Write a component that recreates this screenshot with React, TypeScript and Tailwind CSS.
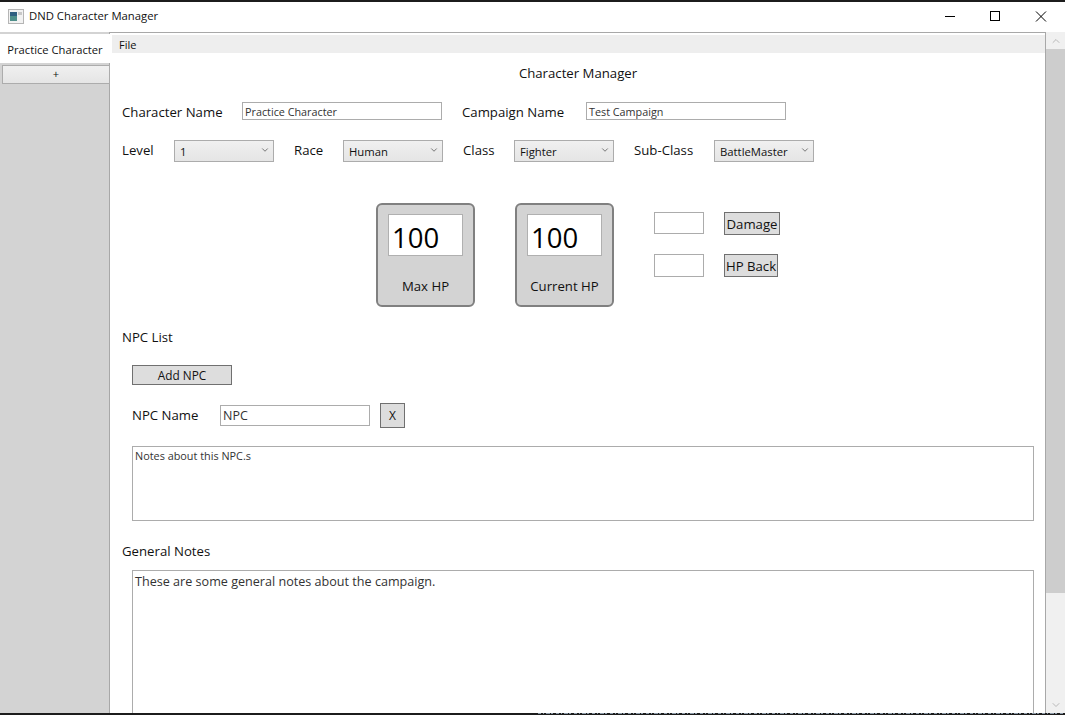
import React from 'react';
import { ChevronDown, ChevronUp } from 'lucide-react';

const fieldLabel = 'text-[13.2px] leading-[20px] text-[#111]';

const Select: React.FC<{ value: string; className: string }> = ({ value, className }) => (
    <div className={`h-[22px] border border-[#acacac] bg-gradient-to-b from-[#f0f0f0] to-[#e5e5e5] flex items-center justify-between pl-[5px] pr-[3px] text-[11.3px] text-[#111] ${className}`}>
        <span className="mt-[2px]">{value}</span>
        <ChevronDown size={10} strokeWidth={2} className="text-[#606060] mb-[3px]" />
    </div>
);

const HpCard: React.FC<{ label: string; className?: string }> = ({ label, className = '' }) => (
    <div className={`w-[99px] h-[104px] rounded-[6px] border-2 border-[#808080] bg-[#d3d3d3] flex flex-col items-center pt-[9px] ${className}`}>
        <div className="w-[75px] h-[42px] bg-white border border-[#b0b0b0] flex items-center pl-[3px] pt-[5px] text-[27.5px] text-black">100</div>
        <div className="mt-[20px] text-[13.2px] leading-[20px] text-[#111]">{label}</div>
    </div>
);

export default function App() {
    return (
        <div className="w-[1065px] h-[715px] overflow-hidden bg-white flex flex-col border-t-2 border-[#1c1c1c] font-['Open_Sans',sans-serif]">
            {/* title bar */}
            <div className="h-[30px] shrink-0 flex items-center bg-white">
                <svg width="16" height="15" viewBox="0 0 16 15" className="ml-[8px] mb-[2px]">
                    <rect x="0.5" y="0.5" width="15" height="14" fill="#f2f2f2" stroke="#b5b5b5" />
                    <rect x="2" y="3" width="7" height="9" fill="#4f8f8a" />
                    <rect x="2" y="3" width="7" height="4" fill="#2f5f80" />
                    <rect x="10" y="3" width="4" height="3" fill="#c8c8c8" />
                </svg>
                <div className="ml-[5px] text-[11.3px] text-[#111] mb-[1px]">DND Character Manager</div>
                <div className="ml-auto flex items-center">
                    <svg width="150" height="30" viewBox="0 0 150 30">
                        <path d="M30 14.5H40" stroke="#000" fill="none" />
                        <rect x="75.5" y="9.5" width="9" height="9" stroke="#000" fill="none" />
                        <path d="M121 9.5L131 19.5M131 9.5L121 19.5" stroke="#000" fill="none" />
                    </svg>
                </div>
            </div>

            <div className="flex-1 min-h-0 flex">
                {/* tab strip */}
                <div className="w-[109px] shrink-0 bg-[#d3d3d3] flex flex-col pt-[2px]">
                    <div className="h-[29px] w-[110px] shrink-0 bg-white pt-[3px] flex items-center justify-center text-[11.2px] text-[#111] z-10">Practice Character</div>
                    <div className="h-[19px] mt-[2px] ml-[2px] w-[108px] z-10 border border-[#acacac] bg-gradient-to-b from-[#f0f0f0] to-[#e5e5e5] flex items-center justify-center text-[11px] text-[#111]">+</div>
                </div>

                {/* main panel */}
                <div className="flex-1 min-w-0 flex flex-col border-l border-t border-[#a8a8a8]">
                    <div className="flex-1 min-h-0 flex">
                        <div className="flex-1 min-w-0 overflow-hidden border-r border-[#a8a8a8] pt-[2px]">
                            <div className="ml-[2px] h-[18px] bg-[#eeeeee] pl-[7px] pt-[1px] text-[11px] leading-[18px] text-[#111]">File</div>

                            <div className="mt-[10px] h-[20px] pl-[1px] text-center text-[13.2px] leading-[20px] text-[#111]">Character Manager</div>

                            <div className="mt-[19px] ml-[12px] flex items-center h-[18px]">
                                <div className={`${fieldLabel} w-[120px] mt-[1px]`}>Character Name</div>
                                <div className="w-[200px] h-[18px] border border-[#acacac] pl-[2px] pt-[1px] text-[10.8px] leading-[16px] text-[#333]">Practice Character</div>
                                <div className={`${fieldLabel} ml-[20px] w-[124px] mt-[1px]`}>Campaign Name</div>
                                <div className="w-[200px] h-[18px] border border-[#acacac] pl-[2px] pt-[1px] text-[10.8px] leading-[16px] text-[#333]">Test Campaign</div>
                            </div>

                            <div className="mt-[20px] ml-[12px] flex items-center h-[22px]">
                                <div className={`${fieldLabel} w-[52px] -mt-[3px]`}>Level</div>
                                <Select value="1" className="w-[100px]" />
                                <div className={`${fieldLabel} ml-[20px] w-[49px] -mt-[3px]`}>Race</div>
                                <Select value="Human" className="w-[100px]" />
                                <div className={`${fieldLabel} ml-[20px] w-[51px] -mt-[3px]`}>Class</div>
                                <Select value="Fighter" className="w-[100px]" />
                                <div className={`${fieldLabel} ml-[20px] w-[80px] -mt-[3px]`}>Sub-Class</div>
                                <Select value="BattleMaster" className="w-[100px]" />
                            </div>

                            <div className="mt-[41px] ml-[266px] flex">
                                <HpCard label="Max HP" />
                                <HpCard label="Current HP" className="ml-[40px]" />
                                <div className="ml-[40px] mt-[9px] flex flex-col">
                                    <div className="flex">
                                        <div className="w-[50px] h-[22px] border border-[#acacac]" />
                                        <div className="ml-[20px] w-[56px] h-[23px] border border-[#707070] bg-[#dddddd] pt-[2px] flex items-center justify-center text-[13.2px] text-[#111]">Damage</div>
                                    </div>
                                    <div className="flex mt-[19px]">
                                        <div className="w-[50px] h-[23px] border border-[#acacac]" />
                                        <div className="ml-[20px] w-[54px] h-[23px] border border-[#707070] bg-[#dddddd] pt-[2px] flex items-center justify-center text-[13.2px] text-[#111]">HP Back</div>
                                    </div>
                                </div>
                            </div>

                            <div className={`${fieldLabel} mt-[20px] ml-[12px]`}>NPC List</div>

                            <div className="mt-[18px] ml-[22px] w-[100px] h-[20px] border border-[#707070] bg-[#dddddd] pt-[1px] flex items-center justify-center text-[11.8px] text-[#111]">Add NPC</div>

                            <div className="mt-[18px] ml-[22px] flex items-center h-[25px]">
                                <div className={`${fieldLabel} w-[88px] -mt-[1px]`}>NPC Name</div>
                                <div className="w-[150px] h-[21px] border border-[#acacac] pl-[2px] text-[12.5px] leading-[19px] text-[#333]">NPC</div>
                                <div className="ml-[10px] w-[25px] h-[25px] border border-[#707070] bg-[#dddddd] flex items-center justify-center text-[12px] text-[#111]">X</div>
                            </div>

                            <div className="mt-[18px] ml-[22px] w-[902px] h-[75px] border border-[#acacac] pl-[2px] text-[10.85px] leading-[18px] text-[#333]">Notes about this NPC.s</div>

                            <div className={`${fieldLabel} mt-[20px] ml-[12px]`}>General Notes</div>

                            <div className="mt-[9px] ml-[22px] w-[902px] h-[200px] border border-[#acacac] pl-[2px] pt-[1px] text-[12.6px] leading-[20px] text-[#333]">These are some general notes about the campaign.</div>
                        </div>

                        {/* scrollbar */}
                        <div className="w-[19px] shrink-0 -mt-px bg-[#f0f0f0] flex flex-col">
                            <div className="h-[17px] flex items-center justify-center">
                                <ChevronUp size={12} strokeWidth={1.5} className="text-[#a6a6a6]" />
                            </div>
                            <div className="h-[544px] bg-[#cdcdcd]" />
                            <div className="mt-auto h-[17px] flex items-center justify-center">
                                <ChevronDown size={12} strokeWidth={1.5} className="text-[#a6a6a6]" />
                            </div>
                        </div>
                    </div>
                </div>
            </div>

            {/* desktop peeking out under the window */}
            <div className="h-[2px] shrink-0 bg-[#1c1c1c]">
                <svg width="1065" height="2" viewBox="0 0 1065 2" className="block">
                    <path d="M538 0.5H1065" stroke="#8c9aa8" strokeWidth="1" strokeDasharray="3 2 1 2 4 1 2 3" fill="none" />
                </svg>
            </div>
        </div>
    );
}
